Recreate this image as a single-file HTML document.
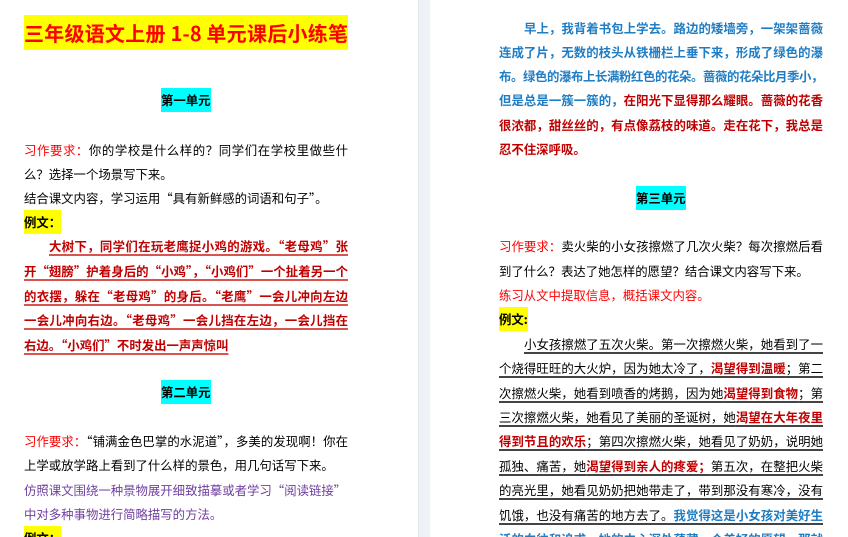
<!DOCTYPE html>
<html><head><meta charset="utf-8"><style>
html,body{margin:0;padding:0;width:848px;height:537px;overflow:hidden;background:#fff;position:relative;
font-family:"Noto Sans CJK SC","Liberation Sans",sans-serif;}
.strip{position:absolute;left:418px;top:0;width:11px;height:537px;background:#eef1f6;border-left:1px solid #e3e7ee;}
.l{position:absolute;font-size:12.4px;line-height:18px;height:18px;white-space:nowrap;color:#000;overflow:visible}
.j{width:324px;text-align:justify;text-align-last:justify;}
.L{left:24px}.R{left:499px}
.red{color:#ff0000}
.dr{color:#c00000;font-weight:bold}
.ul{text-decoration:underline;text-decoration-thickness:2px;text-underline-offset:3px}
.ulr{text-decoration-color:#d9534f}
.ulb{text-decoration-color:#444}
.blue{color:#1f7dc4;font-weight:bold}
.pur{color:#7040a0}
.b{font-weight:bold}
.hy{background:#ffff00}
.hc{background:#00ffff;padding:3px 0}
.title{position:absolute;left:24px;top:15px;width:324px;height:35px;background:#ffff00;color:#ff0000;font-weight:bold;font-size:20px;line-height:35px;text-align:justify;text-align-last:justify;white-space:nowrap;}
</style></head><body>
<div class="strip"></div>
<div class="title">三年级语文上册 1-8 单元课后小练笔</div>

<div class="l b" style="left:161px;top:91px"><span class="hc">第一单元</span></div>
<div class="l L j" style="top:141px"><span class="red">习作要求：</span>你的学校是什么样的？同学们在学校里做些什</div>
<div class="l L" style="top:165px">么？选择一个场景写下来。</div>
<div class="l L" style="top:189px">结合课文内容，学习运用“具有新鲜感的词语和句子”。</div>
<div class="l L b" style="top:213px"><span class="hy" style="padding:3px 0">例文：</span></div>
<div class="l L j dr ul ulr" style="top:237px;padding-left:25px;width:299px">大树下，同学们在玩老鹰捉小鸡的游戏。“老母鸡”张</div>
<div class="l L j dr ul ulr" style="top:262px">开“翅膀”护着身后的“小鸡”，“小鸡们”一个扯着另一个</div>
<div class="l L j dr ul ulr" style="top:287px">的衣摆，躲在“老母鸡”的身后。“老鹰”一会儿冲向左边</div>
<div class="l L j dr ul ulr" style="top:311px">一会儿冲向右边。“老母鸡”一会儿挡在左边，一会儿挡在</div>
<div class="l L dr ul ulr" style="top:336px">右边。“小鸡们”不时发出一声声惊叫</div>

<div class="l b" style="left:161px;top:383px"><span class="hc">第二单元</span></div>
<div class="l L j" style="top:432px"><span class="red">习作要求：</span>“铺满金色巴掌的水泥道”，多美的发现啊！你在</div>
<div class="l L" style="top:456px">上学或放学路上看到了什么样的景色，用几句话写下来。</div>
<div class="l L pur" style="top:481px">仿照课文围绕一种景物展开细致描摹或者学习“阅读链接”</div>
<div class="l L pur" style="top:505px">中对多种事物进行简略描写的方法。</div>
<div class="l L b" style="top:529px"><span class="hy" style="padding:3px 0">例文：</span></div>

<div class="l R j blue" style="top:19px;padding-left:25px;width:299px">早上，我背着书包上学去。路边的矮墙旁，一架架蔷薇</div>
<div class="l R j blue" style="top:43px">连成了片，无数的枝头从铁栅栏上垂下来，形成了绿色的瀑</div>
<div class="l R j blue" style="top:67px;letter-spacing:-0.4px">布。绿色的瀑布上长满粉红色的花朵。蔷薇的花朵比月季小，</div>
<div class="l R j blue" style="top:91px">但是总是一簇一簇的，<span class="dr">在阳光下显得那么耀眼。蔷薇的花香</span></div>
<div class="l R j dr" style="top:116px">很浓都，甜丝丝的，有点像荔枝的味道。走在花下，我总是</div>
<div class="l R dr" style="top:140px">忍不住深呼吸。</div>

<div class="l b" style="left:636px;top:189px"><span class="hc">第三单元</span></div>
<div class="l R j" style="top:237px"><span class="red">习作要求：</span>卖火柴的小女孩擦燃了几次火柴？每次擦燃后看</div>
<div class="l R" style="top:262px">到了什么？表达了她怎样的愿望？结合课文内容写下来。</div>
<div class="l R red" style="top:286px">练习从文中提取信息，概括课文内容。</div>
<div class="l R b" style="top:310px"><span class="hy" style="padding:3px 0">例文:</span></div>
<div class="l R j ul ulb" style="top:335px;padding-left:25px;width:299px">小女孩擦燃了五次火柴。第一次擦燃火柴，她看到了一</div>
<div class="l R j ul ulb" style="top:359px">个烧得旺旺的大火炉，因为她太冷了，<span class="dr">渴望得到温暖</span>；第二</div>
<div class="l R j ul ulb" style="top:384px">次擦燃火柴，她看到喷香的烤鹅，因为她<span class="dr">渴望得到食物</span>；第</div>
<div class="l R j ul ulb" style="top:408px">三次擦燃火柴，她看见了美丽的圣诞树，她<span class="dr">渴望在大年夜里</span></div>
<div class="l R j ul ulb" style="top:432px"><span class="dr">得到节且的欢乐</span>；第四次擦燃火柴，她看见了奶奶，说明她</div>
<div class="l R j ul ulb" style="top:457px">孤独、痛苦，她<span class="dr">渴望得到亲人的疼爱；</span>第五次，在整把火柴</div>
<div class="l R j ul ulb" style="top:481px">的亮光里，她看见奶奶把她带走了，带到那没有寒冷，没有</div>
<div class="l R j ul ulb" style="top:506px">饥饿，也没有痛苦的地方去了。<span class="blue">我觉得这是小女孩对美好生</span></div>
<div class="l R j ul ulb blue" style="top:530px">活的向往和追求，她的内心深处蕴藏一个美好的愿望，那就</div>
</body></html>
